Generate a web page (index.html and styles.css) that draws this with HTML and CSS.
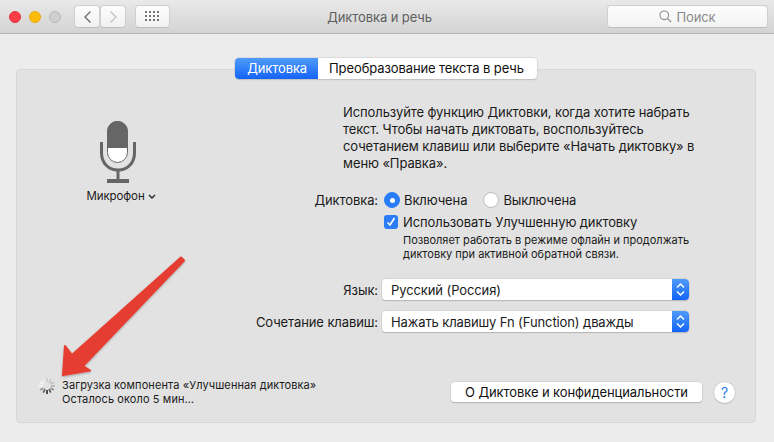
FILE: index.html
```html
<!DOCTYPE html>
<html lang="ru">
<head>
<meta charset="utf-8">
<title>Диктовка и речь</title>
<link rel="stylesheet" href="styles.css">
</head>
<body>
<div class="window">
  <header class="titlebar">
    <div class="lights">
      <span class="light red"></span>
      <span class="light yellow"></span>
      <span class="light gray"></span>
    </div>
    <div class="navgroup">
      <button class="tbtn nav"><svg width="9" height="14" viewBox="0 0 9 14"><path d="M7.5 1.5 2 7l5.5 5.5" fill="none" stroke="#6f6f6f" stroke-width="1.4"/></svg></button>
      <button class="tbtn nav"><svg width="9" height="14" viewBox="0 0 9 14"><path d="M1.5 1.5 7 7l-5.5 5.5" fill="none" stroke="#c4c4c4" stroke-width="1.4"/></svg></button>
    </div>
    <button class="tbtn grid"><svg width="15" height="11" viewBox="0 0 15 11" fill="#757575"><rect x="0" y="0" width="2" height="2"/><rect x="4" y="0" width="2" height="2"/><rect x="8" y="0" width="2" height="2"/><rect x="12" y="0" width="2" height="2"/><rect x="0" y="4" width="2" height="2"/><rect x="4" y="4" width="2" height="2"/><rect x="8" y="4" width="2" height="2"/><rect x="12" y="4" width="2" height="2"/><rect x="0" y="8" width="2" height="2"/><rect x="4" y="8" width="2" height="2"/><rect x="12" y="8" width="2" height="2"/><rect x="8" y="8" width="2" height="2"/></svg></button>
    <div class="title">Диктовка и речь</div>
    <div class="search"><svg width="13" height="13" viewBox="0 0 13 13"><circle cx="5.3" cy="5.3" r="4.3" fill="none" stroke="#8a8a8a" stroke-width="1.1"/><path d="M8.4 8.4 12 12" stroke="#8a8a8a" stroke-width="1.2"/></svg><span>Поиск</span></div>
  </header>
  <main class="content">
    <div class="tabs">
      <span class="tab active">Диктовка</span>
      <span class="tab">Преобразование текста в речь</span>
    </div>
    <section class="panel">
      <div class="columns">
        <div class="mic">
          <svg class="mic-icon" width="36" height="62" viewBox="0 0 36 62">
            <defs><clipPath id="cap"><rect x="7" y="0" width="21" height="42" rx="10.500"/></clipPath></defs>
            <rect x="7" y="0" width="21" height="42" rx="10.500" fill="#fff"/>
            <rect x="7" y="0" width="21" height="27" fill="#666" clip-path="url(#cap)"/>
            <rect x="7.500" y=".5" width="20" height="41" rx="10" fill="none" stroke="#666" stroke-width="1"/>
            <path d="M1.500 21v11c0 10 7 17 16.500 17s16.500-7 16.500-17V21" fill="none" stroke="#666" stroke-width="3"/>
            <rect x="16.500" y="49" width="3" height="10" fill="#666"/>
            <rect x="7" y="58" width="22" height="4" fill="#666"/>
          </svg>
          <div class="mic-label">Микрофон <svg width="8" height="6" viewBox="0 0 8 6"><path d="M1 1l3 3 3-3" fill="none" stroke="#222" stroke-width="1.4"/></svg></div>
        </div>
        <div class="settings">
          <p class="intro">Используйте функцию Диктовки, когда хотите набрать текст. Чтобы начать диктовать, воспользуйтесь сочетанием клавиш или выберите «Начать диктовку» в меню «Правка».</p>
          <div class="row radios">
            <span class="label">Диктовка:</span>
            <span class="radio on"></span><span class="opt">Включена</span>
            <span class="radio"></span><span class="opt">Выключена</span>
          </div>
          <div class="row check">
            <span class="checkbox"><svg width="10" height="10" viewBox="0 0 10 10"><path d="M1.500 5.500 4 8l4.500-7" fill="none" stroke="#fff" stroke-width="1.700"/></svg></span>
            <span>Использовать Улучшенную диктовку</span>
          </div>
          <p class="note">Позволяет работать в режиме офлайн и продолжать диктовку при активной обратной связи.</p>
          <div class="row select-row first">
            <span class="label">Язык:</span>
            <div class="select"><span>Русский (Россия)</span><i class="stepper"><svg width="9" height="15" viewBox="0 0 9 15"><path d="M1 5.500 4.500 2 8 5.500M1 9.500 4.500 13 8 9.500" fill="none" stroke="#fff" stroke-width="1.500"/></svg></i></div>
          </div>
          <div class="row select-row">
            <span class="label">Сочетание клавиш:</span>
            <div class="select"><span>Нажать клавишу Fn (Function) дважды</span><i class="stepper"><svg width="9" height="15" viewBox="0 0 9 15"><path d="M1 5.500 4.500 2 8 5.500M1 9.500 4.500 13 8 9.500" fill="none" stroke="#fff" stroke-width="1.500"/></svg></i></div>
          </div>
        </div>
      </div>
      <footer class="bottom">
        <svg class="spinner" width="18" height="18" viewBox="0 0 18 18" stroke-width="1.800" stroke-linecap="butt">
          <path d="M9 1v4" stroke="#d0d0d0"/>
          <path d="M12.800 2.400 11 5.800" stroke="#c8c8c8"/>
          <path d="M15.800 5 12.400 7" stroke="#c0c0c0"/>
          <path d="M17 9h-4" stroke="#b4b4b4"/>
          <path d="M15.800 13 12.400 11" stroke="#8f8f8f"/>
          <path d="M12.800 15.600 11 12.200" stroke="#5c5c5c"/>
          <path d="M9 17v-4" stroke="#3c3c3c"/>
          <path d="M5.200 15.600 7 12.200" stroke="#666"/>
          <path d="M2.200 13 5.600 11" stroke="#9a9a9a"/>
          <path d="M1 9h4" stroke="#f6f6f6"/>
          <path d="M2.200 5 5.600 7" stroke="#f6f6f6"/>
          <path d="M5.200 2.400 7 5.800" stroke="#eee"/>
        </svg>
        <div class="status">Загрузка компонента «Улучшенная диктовка»<br>Осталось около 5 мин…</div>
        <button class="privacy">О Диктовке и конфиденциальности</button>
        <span class="help">?</span>
      </footer>
      <svg class="arrow" width="135" height="130" viewBox="0 0 135 130">
        <defs><filter id="sh" x="-10%" y="-10%" width="120%" height="120%"><feDropShadow dx="0" dy="1" stdDeviation="1" flood-color="#000" flood-opacity=".3"/></filter></defs>
        <path d="M126 7.500 129 10.500 28 116 35 120.500 8 125 10 96 17 105Z" fill="#e63d30" stroke="#e63d30" stroke-width="2" stroke-linejoin="round" filter="url(#sh)"/>
      </svg>
    </section>
  </main>
</div>
</body>
</html>
```
FILE: styles.css
```css
* { box-sizing: border-box; }
html, body { margin: 0; padding: 0; }
body { width: 774px; height: 442px; overflow: hidden; font-family: Inter, "Liberation Sans", Arial, sans-serif; font-size: 13px; letter-spacing: -.1px; color: #1a1a1a; background: #ececec; }
.window { width: 774px; height: 442px; display: flex; flex-direction: column; }
.titlebar { height: 34px; flex: none; display: flex; align-items: center; padding: 0 6px 0 9px; background: linear-gradient(#e9e9e9, #d3d3d3); border-bottom: 1px solid #b1b1b1; }
.lights { display: flex; gap: 8px; margin-right: 13px; }
.light { width: 12px; height: 12px; border-radius: 50%; }
.red { background: #fc3d48; border: 1px solid #e5323c; }
.yellow { background: #fdbb0a; border: 1px solid #e9aa0c; }
.gray { background: #cfcfcf; border: 1px solid #b9b9b9; }
.tbtn { height: 23px; padding: 0; background: linear-gradient(#fdfdfd, #f1f1f1); border: 1px solid #cfcfcf; border-bottom-color: #bdbdbd; border-radius: 4px; display: flex; align-items: center; justify-content: center; }
.navgroup { display: flex; margin-right: 9px; }
.nav { width: 26px; }
.grid { width: 35px; }
.title { flex: 1; text-align: center; color: #5e5e5e; padding-right: 18px; }
.search { width: 161px; height: 23px; display: flex; align-items: center; justify-content: center; gap: 4px; background: linear-gradient(#fdfdfd, #f3f3f3); border: 1px solid #cfcfcf; border-bottom-color: #bdbdbd; border-radius: 4px; color: #8a8a8a; }
.content { flex: 1; padding: 24px 18px 0 16px; display: flex; flex-direction: column; }
.tabs { align-self: center; display: flex; height: 21px; margin-bottom: -10px; position: relative; z-index: 1; background: #fff; border-radius: 4px; box-shadow: 0 0 0 .5px #c8c8c8, 0 1px 1px #bbb; }
.tab { padding: 0 13px 0 11px; line-height: 20px; color: #111; white-space: nowrap; }
.tab.active { padding: 0 11px 0 12px; background: linear-gradient(#4f9cfb, #1463f5); color: #fff; border-radius: 4px 0 0 4px; }
.panel { height: 354px; background: #e2e2e2; border: 1px solid #d8d8d8; border-radius: 4px; position: relative; padding-top: 34px; display: flex; flex-direction: column; }
.columns { display: flex; flex: 1; }
.mic { width: 206px; flex: none; padding-top: 17px; display: flex; flex-direction: column; align-items: center; gap: 6px; }
.mic-icon { display: block; margin-right: 4px; }
.mic-label { font-size: 11.500px; display: flex; align-items: center; gap: 3px; white-space: nowrap; margin-left: 2px; }
.mic-label svg { margin-top: 1px; }
.settings { width: 480px; flex: none; }
.intro { margin: 0 0 0 120px; width: 358px; line-height: 17px; }
.row { display: flex; align-items: center; }
.radios { margin-top: 18px; height: 20px; }
.label { width: 155px; text-align: right; margin-right: 4px; flex: none; white-space: nowrap; }
.radios .label { margin-right: 6px; }
.radio { width: 16px; height: 16px; border-radius: 50%; background: #fff; border: 1px solid #bcbcbc; flex: none; position: relative; }
.radio.on { background: #2a7df6; border-color: #2a7df6; }
.radio.on::after { content: ""; position: absolute; left: 4.500px; top: 4.500px; width: 5px; height: 5px; border-radius: 50%; background: #fff; }
.opt { margin-left: 4px; margin-right: 16px; }
.check { margin: 4px 0 0 161px; height: 16px; gap: 5px; }
.checkbox { width: 14px; height: 14px; border-radius: 3px; background: #2a7df6; display: flex; align-items: center; justify-content: center; flex: none; }
.note { margin: 3px 0 0 180px; font-size: 11px; letter-spacing: 0; line-height: 14px; width: 310px; }
.select-row { height: 21px; margin-top: 11px; }
.select-row.first { margin-top: 18px; }
.select { width: 307px; height: 21px; flex: none; background: #fff; border-radius: 4px; box-shadow: 0 0 0 .5px #c4c4c4, 0 1px 1px #aaa; display: flex; align-items: center; justify-content: space-between; padding-left: 9px; overflow: hidden; }
.stepper { width: 17px; height: 21px; background: linear-gradient(#4f9cfb, #1463f5); display: flex; align-items: center; justify-content: center; }
.bottom { height: 28px; flex: none; display: flex; align-items: center; position: relative; margin-bottom: 16px; }
.spinner { position: absolute; left: 21px; top: -1px; }
.status { margin-left: 45px; font-size: 11px; letter-spacing: .1px; line-height: 14px; width: 389px; flex: none; }
.privacy { width: 251px; height: 20px; font: inherit; letter-spacing: inherit; color: #111; background: #fff; border: none; border-radius: 4px; box-shadow: 0 0 0 .5px #c8c8c8, 0 1px 1px #aaa; padding: 0; flex: none; }
.help { width: 21px; height: 21px; margin-left: 12px; border-radius: 50%; background: #fff; box-shadow: 0 0 0 .5px #c8c8c8, 0 1px 1px #aaa; color: #2a7df6; text-align: center; line-height: 21px; font-size: 14px; flex: none; }
.arrow { position: absolute; left: 38px; top: 180px; }
```
